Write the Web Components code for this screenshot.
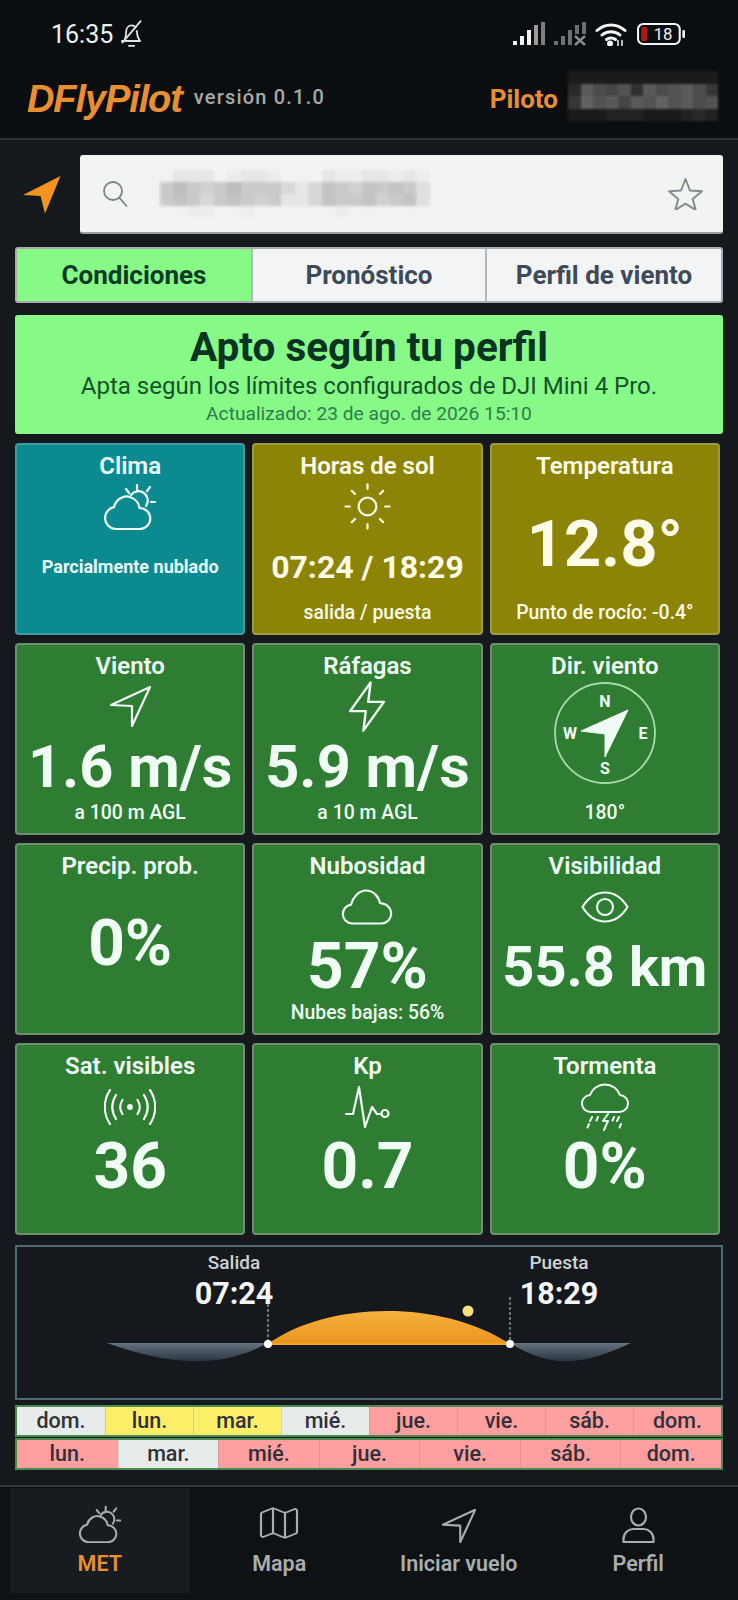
<!DOCTYPE html>
<html lang="es">
<head>
<meta charset="utf-8">
<title>DFlyPilot</title>
<style>
  html, body { margin: 0; padding: 0; background: #15191d; }
  body { width: 738px; height: 1600px; overflow: hidden; font-family: Roboto, "Liberation Sans", sans-serif; display: flex; flex-direction: column; }
</style>
</head>
<body>
<template id="icons">
  <svg data-name="cloud-sun" viewBox="0 0 52 46"><path d="M12 45a11 11 0 0 1-2-21.800C12 15 20 11 26 13c6 2 9 7 9.500 11A10.500 10.500 0 0 1 36 45Z"/><path d="M27 11a9 9 0 0 1 15 11"/><path d="M33 1v5M22 5l3 4M46 3l-3 4M47 18h4"/></svg>
  <svg data-name="sun" viewBox="0 0 24 24"><circle cx="12" cy="12" r="4"/><path d="M12 2v2M12 20v2M4.930 4.930l1.410 1.410M17.660 17.660l1.410 1.410M2 12h2M20 12h2M6.340 17.660l-1.410 1.410M19.070 4.930l-1.410 1.410"/></svg>
  <svg data-name="nav" viewBox="0 0 41 41"><path d="M1 19 40 1 22 40 22 20Z"/></svg>
  <svg data-name="zap" viewBox="0 0 24 24"><path d="M13.500 1.500 5 14h6.500l-1 8.500L19 10h-6.500z"/></svg>
  <svg data-name="cloud" viewBox="0 0 52 36"><path d="M11 34.500a9.500 9.500 0 0 1-1-18.900C12 8 18 1.500 25 1.500c7 0 12.500 5.500 14 12.500 1 .300 2 .500 3 .700A10 10 0 0 1 41 34.500Z"/></svg>
  <svg data-name="eye" viewBox="0 0 48 32"><path d="M1.500 16C7 7 15 1.500 24 1.500S41 7 46.500 16C41 25 33 30.500 24 30.500S7 25 1.500 16Z"/><circle cx="24" cy="16" r="8"/></svg>
  <svg data-name="radio" viewBox="0 0 52 36"><circle cx="26" cy="18" r="1.800" fill="currentColor"/><path d="M18.500 11c-3 4.500-3 9.500 0 14M33.500 11c3 4.500 3 9.500 0 14M12 6c-5 8-5 16 0 24M40 6c5 8 5 16 0 24M6 1c-7 10-7 24 0 34M46 1c7 10 7 24 0 34"/></svg>
  <svg data-name="pulse" viewBox="0 0 45 42"><path d="M1 28h7L14 1l6 40 7-20 5 7h4"/><circle cx="40" cy="27.500" r="3.500"/></svg>
  <svg data-name="storm" viewBox="0 0 48 48"><path d="M10 29a8.500 8.500 0 0 1-1-17C11 6 17 1.500 24 1.500S37 6 39 12a8.500 8.500 0 0 1-1 17Z"/><path d="M27 31l-5 7h5l-4 9M11 34l-2 4M8 41l-1.500 3.500M38 34l-2 4M40 41l-1.500 3.500M17 34l-1.500 3.500M33 34l-1.500 3.500"/></svg>
  <svg data-name="map" viewBox="0 0 24 24"><path d="M14.106 5.553a2 2 0 0 0 1.788 0l3.659-1.830A1 1 0 0 1 21 4.619v12.764a1 1 0 0 1-.553.894l-4.553 2.277a2 2 0 0 1-1.788 0l-4.212-2.106a2 2 0 0 0-1.788 0l-3.659 1.830A1 1 0 0 1 3 19.381V6.618a1 1 0 0 1 .553-.894l4.553-2.277a2 2 0 0 1 1.788 0z"/><path d="M15 5.764v15"/><path d="M9 3.236v15"/></svg>
  <svg data-name="user" viewBox="0 0 33 36"><ellipse cx="16.500" cy="10" rx="7.500" ry="8.500"/><path d="M1.500 35v-3c0-6 5-10 10-10h10c5 0 10 4 10 10v3z"/></svg>
</template>

<app-top></app-top>
<main-view></main-view>
<bottom-nav></bottom-nav>

<script>
// iconos compartidos, clonados desde el template de arriba
function iconMarkup(name, w, h, sw) {
  const src = document.getElementById('icons').content.querySelector(`[data-name="${name}"]`);
  const svg = src.cloneNode(true);
  svg.removeAttribute('data-name');
  svg.setAttribute('width', w);
  svg.setAttribute('height', h);
  svg.setAttribute('preserveAspectRatio', 'none');
  svg.setAttribute('fill', 'none');
  svg.setAttribute('stroke', 'currentColor');
  svg.setAttribute('stroke-width', sw || 2.2);
  svg.setAttribute('stroke-linecap', 'round');
  svg.setAttribute('stroke-linejoin', 'round');
  return svg.outerHTML;
}

// zona pixelada (nombre del piloto, dirección buscada)
class PixelBlur extends HTMLElement {
  connectedCallback() {
    const rows = this.getAttribute('data').split('/');
    const w = this.getAttribute('w'), h = this.getAttribute('h');
    const max = +(this.getAttribute('max') || 255);
    let cells = '';
    rows.forEach(r => {
      for (const c of r) {
        const v = Math.min(max, parseInt(c, 36) * 7 + 20);
        cells += `<i style="background:rgb(${v},${v},${v + 1})"></i>`;
      }
    });
    this.attachShadow({mode: 'open'}).innerHTML = `
      <style>
        :host { display: block; }
        .g { display: grid; grid-template-columns: repeat(${rows[0].length}, ${w}px); grid-auto-rows: ${h}px; filter: blur(${this.getAttribute('blur') || 1.2}px); }
      </style>
      <div class="g">${cells}</div>`;
  }
}
customElements.define('pixel-blur', PixelBlur);

class AppTop extends HTMLElement {
  constructor() {
    super();
    this.attachShadow({mode: 'open'}).innerHTML = `
      <style>
        :host { display: block; background: #0b0e11; border-bottom: 2px solid #2c3034; height: 138px; color: #fff; }
        .status { height: 66px; display: flex; align-items: center; padding: 2px 52px 0 51px; box-sizing: border-box; }
        .time { font-size: 25px; color: #eef0f0; }
        .bell { margin-left: 5px; color: #dfe1e1; }
        .right { margin-left: auto; display: flex; align-items: center; gap: 8px; }
        .head { display: flex; align-items: center; height: 66px; padding: 0 20px 0 27px; }
        .logo { font: italic 700 38px "Liberation Sans", sans-serif; color: #e98f31; letter-spacing: -1.100px; }
        .ver { margin-left: 12px; margin-top: -4px; font-size: 20px; font-weight: 500; color: #a5a9ab; letter-spacing: 1.200px; }
        .pil { margin-left: auto; font-size: 26px; font-weight: 700; color: #e98f31; }
        pixel-blur { margin-left: 10px; margin-top: -6px; }
      </style>
      <div class="status">
        <span class="time">16:35</span>
        <svg class="bell" width="26" height="30" viewBox="0 0 24 28" fill="none" stroke="currentColor" stroke-width="1.700" stroke-linejoin="round" stroke-linecap="round"><path d="M6 20c1-2 1.500-4 1.500-8 0-3.500 2-6 5-6 1.500 0 2.800.600 3.700 1.800M17.500 11c0 4 1 7 3 9.500H3.500"/><path d="M21 2 4 22"/><path d="M10 25h5"/></svg>
        <div class="right">
          <svg width="33" height="24" viewBox="0 0 33 24"><rect x="0" y="19" width="4" height="4" fill="#f0f0f0"/><rect x="7" y="14" width="4" height="9" fill="#f0f0f0"/><rect x="14" y="8" width="4" height="15" fill="#f0f0f0"/><rect x="21" y="3" width="4" height="20" fill="#9b9b9b"/><rect x="28" y="0" width="4" height="23" fill="#7e7e7e"/></svg>
          <svg width="33" height="24" viewBox="0 0 33 24"><rect x="0" y="19" width="4" height="4" fill="#6f6f6f"/><rect x="7" y="14" width="4" height="9" fill="#6f6f6f"/><rect x="14" y="8" width="4" height="15" fill="#6f6f6f"/><rect x="21" y="3" width="4" height="9" fill="#6f6f6f"/><rect x="28" y="0" width="4" height="12" fill="#6f6f6f"/><path d="M21 14l10 9M31 14l-10 9" stroke="#8a8a8a" stroke-width="2.400"/></svg>
          <svg width="32" height="24" viewBox="0 0 32 24" fill="none" stroke="#f4f4f4" stroke-width="3" stroke-linecap="round"><path d="M2 8.500c8-7.500 20-7.500 28 0"/><path d="M7 13c5-4.500 13-4.500 18 0"/><path d="M11.500 17.500c2.500-2 6.500-2 9 0"/><circle cx="15" cy="21.500" r="1.500" fill="#f4f4f4"/><path d="M23 18.500v5M27 18.500v5" stroke-width="1.500"/></svg>
          <svg width="49" height="22" viewBox="0 0 47 22" preserveAspectRatio="none" style="margin-left:2px"><rect x="1" y="1" width="40" height="20" rx="5" fill="none" stroke="#f4f4f4" stroke-width="2"/><rect x="4" y="4" width="6" height="14" rx="2" fill="#b01818"/><rect x="43.500" y="7" width="2.500" height="8" rx="1" fill="#f4f4f4"/><text x="25" y="17" font-family="Roboto" font-size="16" fill="#f4f4f4" text-anchor="middle">18</text></svg>
        </div>
      </div>
      <div class="head">
        <span class="logo">DFlyPilot</span>
        <span class="ver">versión 0.1.0</span>
        <span class="pil">Piloto</span>
        <pixel-blur w="12.500" h="12.500" data="111111111111/3a8794a89a85/5b9a7a9b9a89/111222111232"></pixel-blur>
      </div>`;
  }
}
customElements.define('app-top', AppTop);

class SearchRow extends HTMLElement {
  constructor() {
    super();
    this.attachShadow({mode: 'open'}).innerHTML = `
      <style>
        :host { display: flex; align-items: center; height: 79px; gap: 19px; }
        .arrow { flex: none; margin-left: 7px; }
        .box { flex: 1; height: 100%; box-sizing: border-box; background: #f2f4f2; border-bottom: 2px solid #9b9f9f; border-radius: 3px; display: flex; align-items: center; padding: 0 20px 0 22px; }
        .mag { color: #7d8487; }
        pixel-blur { margin-left: 18px; }
        .star { margin-left: auto; color: #858b90; }
      </style>
      <svg class="arrow" width="39" height="39" viewBox="0 0 39 39"><path d="M38.500 1 23 38.500 18.500 21 1 20z" fill="#f39420"/></svg>
      <div class="box">
        <svg class="mag" width="26" height="29" viewBox="0 0 26 29" fill="none" stroke="currentColor" stroke-width="1.800" stroke-linecap="round"><circle cx="11" cy="12" r="9"/><path d="M17.500 19l7 8"/></svg>
        <pixel-blur blur="1.600" max="242" w="13.500" h="12" data="zzuuuwvuuvwwxuvvuuvuvzzz/wqoqrqoqqqsuspqrpqpqtzzz/wqpqsqpqrquuspqqprqptzzz/zzwvvxwvwwwzzwvwwxwxzzzz"></pixel-blur>
        <svg class="star" width="35" height="33" viewBox="0 0 35 33" fill="none" stroke="currentColor" stroke-width="2" stroke-linejoin="round"><path d="M17.500 2l4.500 11.500 12 .800-9.300 7.700 3 11-10.200-6.300L7.300 33l3-11L1 14.300l12-.800z"/></svg>
      </div>`;
  }
}
customElements.define('search-row', SearchRow);

class TabBar extends HTMLElement {
  constructor() {
    super();
    this.attachShadow({mode: 'open'}).innerHTML = `
      <style>
        :host { display: grid; grid-template-columns: 234px 234px 1fr; height: 56px; border: 2px solid #a7abad; border-radius: 3px; box-sizing: border-box; background: #f2f4f5; overflow: hidden; }
        div { display: flex; align-items: center; justify-content: center; font-size: 26px; font-weight: 700; color: #3e4a59; white-space: nowrap; }
        div + div { border-left: 2px solid #b4b8ba; }
        .on { background: #86f986; color: #0d3a26; }
      </style>
      <div class="on">Condiciones</div><div>Pronóstico</div><div>Perfil de viento</div>`;
  }
}
customElements.define('tab-bar', TabBar);

class StatusBanner extends HTMLElement {
  constructor() {
    super();
    this.attachShadow({mode: 'open'}).innerHTML = `
      <style>
        :host { display: flex; flex-direction: column; align-items: center; height: 119px; background: #86f986; border-radius: 3px; box-sizing: border-box; padding-top: 10px; }
        h2 { margin: 0; font-size: 40.500px; line-height: 44px; font-weight: 700; color: #0a3321; }
        p { margin: 0; font-size: 24px; line-height: 34px; color: #14532d; }
        small { font-size: 19.200px; line-height: 22px; color: #2f7d4a; }
      </style>
      <h2>Apto según tu perfil</h2>
      <p>Apta según los límites configurados de DJI Mini 4 Pro.</p>
      <small>Actualizado: 23 de ago. de 2026 15:10</small>`;
  }
}
customElements.define('status-banner', StatusBanner);

class MetricCard extends HTMLElement {
  constructor() {
    super();
    this.attachShadow({mode: 'open'}).innerHTML = `
      <style>
        :host { display: flex; flex-direction: column; align-items: center; height: 192px; box-sizing: border-box; border: 2px solid #6f8f72; border-radius: 4px; background: #2e7d32; color: #f0fdf4; padding: 8px 0 9px; text-align: center; overflow: hidden; }
        :host([tone=teal]) { background: #0b8a8f; border-color: #3f9da2; color: #ecfeff; }
        :host([tone=olive]) { background: #8c8407; border-color: #a09a40; color: #fefce8; }
        .t { font-size: 24px; line-height: 26px; font-weight: 600; white-space: nowrap; }
        .ic { height: 53px; display: flex; align-items: center; justify-content: center; margin-top: 1px; }
        .ic:not(:has(svg)) { display: none; }
        .v { font-weight: 700; line-height: 64px; white-space: nowrap; margin-top: 2px; }
        :host([noicon]) .v { margin-top: 33px; }
        .s { margin-top: auto; font-size: 19.400px; line-height: 22px; font-weight: 500; white-space: nowrap; }
      </style>
      <div class="t"></div>
      <div class="ic"></div>
      <div class="v"></div>
      <div class="s"></div>`;
  }
  connectedCallback() {
    const sr = this.shadowRoot;
    sr.querySelector('.t').textContent = this.getAttribute('label');
    const v = sr.querySelector('.v');
    v.textContent = this.getAttribute('value') || '';
    v.style.fontSize = (this.getAttribute('size') || 64) + 'px';
    sr.querySelector('.s').textContent = this.getAttribute('sub') || '';
    const icon = this.getAttribute('icon');
    if (icon) {
      const [w, h] = (this.getAttribute('isize') || '44,44').split(',');
      sr.querySelector('.ic').innerHTML = iconMarkup(icon, w, h, this.getAttribute('isw'));
    } else if (!this.hasAttribute('custom')) {
      this.setAttribute('noicon', '');
    }
    if (this.hasAttribute('custom')) {
      sr.querySelector('.ic').innerHTML = this.customIcon();
      sr.querySelector('.ic').style.height = '102px';
      sr.querySelector('.ic').style.marginTop = '3px';
      v.style.display = 'none';
    }
  }
  customIcon() {
    return `<svg width="104" height="104" viewBox="0 0 104 104" font-family="Roboto" font-weight="700" font-size="16" fill="#f0fdf4" text-anchor="middle">
      <circle cx="52" cy="52" r="50" fill="none" stroke="#a5dba9" stroke-width="1.800"/>
      <text x="52" y="26">N</text><text x="52" y="93">S</text><text x="17" y="58">W</text><text x="90" y="58">E</text>
      <path d="M75 29 52 76 52 53 28 50z" fill="#f0fdf4" stroke="#f0fdf4" stroke-width="1" stroke-linejoin="round"/></svg>`;
  }
}
customElements.define('metric-card', MetricCard);

class SunChart extends HTMLElement {
  constructor() {
    super();
    this.attachShadow({mode: 'open'}).innerHTML = `
      <style>
        :host { display: block; height: 155px; box-sizing: border-box; border: 2px solid #4d6a70; background: #15191d; }
        svg { display: block; }
        text { font-family: Roboto, sans-serif; text-anchor: middle; }
      </style>
      <svg width="704" height="151" viewBox="17 1247 704 151">
        <defs>
          <linearGradient id="day" x1="0" y1="0" x2="0" y2="1"><stop offset="0" stop-color="#f6b03c"/><stop offset="1" stop-color="#e8951f"/></linearGradient>
          <linearGradient id="night" x1="0" y1="0" x2="0" y2="1"><stop offset="0" stop-color="#66727f"/><stop offset="1" stop-color="#2b3440"/></linearGradient>
        </defs>
        <text x="234" y="1269" font-size="19" font-weight="500" fill="#cfd2d3">Salida</text>
        <text x="234" y="1304" font-size="30.500" font-weight="700" fill="#f4f5f5">07:24</text>
        <text x="559" y="1269" font-size="19" font-weight="500" fill="#cfd2d3">Puesta</text>
        <text x="559" y="1304" font-size="30.500" font-weight="700" fill="#f4f5f5">18:29</text>
        <path d="M107 1343C160 1362 215 1372 268 1343Z" fill="url(#night)"/>
        <path d="M510 1343C555 1372 590 1362 631 1343Z" fill="url(#night)"/>
        <path d="M268 1344C325 1302 440 1298 510 1344Z" fill="url(#day)"/>
        <path d="M268 1344H510" stroke="#f3a41e" stroke-width="2"/>
        <path d="M268 1304V1343M510 1297V1343" stroke="#c9cccd" stroke-width="1" stroke-dasharray="3 2"/>
        <circle cx="268" cy="1344" r="4" fill="#fff"/>
        <circle cx="510" cy="1344" r="4" fill="#fff"/>
        <circle cx="468" cy="1311" r="5.500" fill="#f6e27a"/>
      </svg>`;
  }
}
customElements.define('sun-chart', SunChart);

class DayStrip extends HTMLElement {
  connectedCallback() {
    const items = this.getAttribute('days').split(',');
    const cls = {w: '#e7ecea', y: '#fbee68', r: '#ff9f9f'};
    this.attachShadow({mode: 'open'}).innerHTML = `
      <style>
        :host { display: grid; grid-auto-flow: column; grid-auto-columns: 1fr; height: 32px; box-sizing: border-box; border: 2px solid #4b8a50; }
        div { display: flex; align-items: center; justify-content: center; font-size: 21.500px; font-weight: 500; color: #32303a; box-sizing: border-box; padding-bottom: 1px; }
        div + div { border-left: 1px solid rgba(120,130,110,.25); }
      </style>
      ${items.map(s => {
        const [d, c] = s.split(':');
        return `<div style="background:${cls[c]}">${d}</div>`;
      }).join('')}`;
  }
}
customElements.define('day-strip', DayStrip);

class MainView extends HTMLElement {
  constructor() {
    super();
    this.attachShadow({mode: 'open'}).innerHTML = `
      <style>
        :host { display: flex; flex-direction: column; padding: 15px 15px 0; height: 1345px; box-sizing: border-box; }
        tab-bar { margin-top: 13px; }
        status-banner { margin-top: 12px; }
        .grid { display: grid; grid-template-columns: repeat(3, 1fr); gap: 8px 7px; margin: 9px 3px 0 0; }
        sun-chart { margin-top: 10px; }
        .days { display: flex; flex-direction: column; gap: 1px; margin-top: 5px; }
      </style>
      <search-row></search-row>
      <tab-bar></tab-bar>
      <status-banner></status-banner>
      <div class="grid">
        <metric-card tone="teal" label="Clima" icon="cloud-sun" isize="52,46" value="Parcialmente nublado" size="18"></metric-card>
        <metric-card tone="olive" label="Horas de sol" icon="sun" isize="53,53" isw="1" value="07:24 / 18:29" size="32" sub="salida / puesta"></metric-card>
        <metric-card tone="olive" label="Temperatura" value="12.8°" size="65" sub="Punto de rocío: -0.4°"></metric-card>
        <metric-card label="Viento" icon="nav" isize="41,41" value="1.6 m/s" size="59.500" sub="a 100 m AGL"></metric-card>
        <metric-card label="Ráfagas" icon="zap" isize="58,55" isw="1" value="5.9 m/s" size="59.500" sub="a 10 m AGL"></metric-card>
        <metric-card label="Dir. viento" custom sub="180°"></metric-card>
        <metric-card label="Precip. prob." value="0%" size="64"></metric-card>
        <metric-card label="Nubosidad" icon="cloud" isize="52,36" value="57%" size="64" sub="Nubes bajas: 56%"></metric-card>
        <metric-card label="Visibilidad" icon="eye" isize="48,32" value="55.8 km" size="56"></metric-card>
        <metric-card label="Sat. visibles" icon="radio" isize="52,36" value="36" size="64"></metric-card>
        <metric-card label="Kp" icon="pulse" isize="45,42" value="0.7" size="64"></metric-card>
        <metric-card label="Tormenta" icon="storm" isize="48,48" isw="2" value="0%" size="64"></metric-card>
      </div>
      <sun-chart></sun-chart>
      <div class="days">
        <day-strip days="dom.:w,lun.:y,mar.:y,mié.:w,jue.:r,vie.:r,sáb.:r,dom.:r"></day-strip>
        <day-strip days="lun.:r,mar.:w,mié.:r,jue.:r,vie.:r,sáb.:r,dom.:r"></day-strip>
      </div>`;
  }
}
customElements.define('main-view', MainView);

class BottomNav extends HTMLElement {
  constructor() {
    super();
    const items = [
      ['MET', 'cloud-sun', '42,37', 2.6, true],
      ['Mapa', 'map', '48,40', 1.100, false],
      ['Iniciar vuelo', 'nav', '34,34', 2.600, false],
      ['Perfil', 'user', '33,36', 2.200, false]
    ];
    this.attachShadow({mode: 'open'}).innerHTML = `
      <style>
        :host { flex: 1; display: grid; grid-template-columns: repeat(4, 1fr); background: #0e1215; border-top: 2px solid #34383c; padding: 1px 10px 7px 10px; box-sizing: border-box; }
        div { display: flex; flex-direction: column; align-items: center; color: #a9adaf; }
        .box { height: 58px; justify-content: flex-end; padding-bottom: 3px; box-sizing: border-box; }
        .on { background: #181c20; color: #e98f31; }
        span { font-size: 21.500px; font-weight: 600; white-space: nowrap; margin-top: 5px; }
      </style>
      ${items.map(([t, ic, s, sw, on]) => {
        const [w, h] = s.split(',');
        return `<div class="${on ? 'on' : ''}"><div class="box">${iconMarkup(ic, w, h, sw)}</div><span>${t}</span></div>`;
      }).join('')}`;
  }
}
customElements.define('bottom-nav', BottomNav);
</script>
</body>
</html>
